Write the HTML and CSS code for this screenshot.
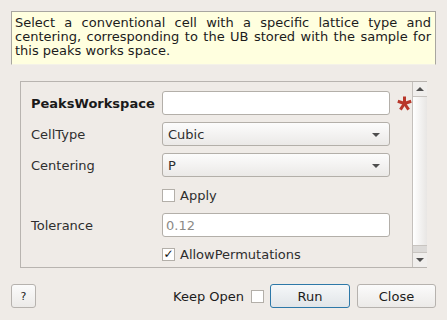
FILE: index.html
```html
<!DOCTYPE html>
<html>
<head>
<meta charset="utf-8">
<link rel="stylesheet" href="styles.css">
</head>
<body>
<div class="dialog">
  <div class="desc">Select a conventional cell with a specific lattice type and centering, corresponding to the UB stored with the sample for this peaks works space.</div>
  <div class="panel">
    <div class="form">
      <div class="row r1">
        <div class="label bold">PeaksWorkspace</div>
        <div class="input"></div>
        <svg class="req" width="15" height="15" viewBox="0 0 15 15"><g stroke="#b8372a" stroke-width="3" stroke-linecap="butt"><line x1="7.5" y1="7.5" x2="7.5" y2="0.5"/><line x1="7.5" y1="7.5" x2="14.2" y2="5.3"/><line x1="7.5" y1="7.5" x2="0.8" y2="5.3"/><line x1="7.5" y1="7.5" x2="11.6" y2="13.6"/><line x1="7.5" y1="7.5" x2="3.4" y2="13.6"/></g></svg>
      </div>
      <div class="row r2">
        <div class="label">CellType</div>
        <div class="combo"><span>Cubic</span><i class="arrow"></i></div>
      </div>
      <div class="row r3">
        <div class="label">Centering</div>
        <div class="combo"><span>P</span><i class="arrow"></i></div>
      </div>
      <div class="row r4">
        <div class="label"></div>
        <div class="check"><span class="box"></span><span>Apply</span></div>
      </div>
      <div class="row r5">
        <div class="label">Tolerance</div>
        <div class="input"><span class="ph">0.12</span></div>
      </div>
      <div class="row r6">
        <div class="label"></div>
        <div class="check"><span class="box checked">✓</span><span>AllowPermutations</span></div>
      </div>
    </div>
    <div class="scrollbar">
      <div class="sbtn up"><i class="tri-up"></i></div>
      <div class="handle"></div>
      <div class="groove"></div>
      <div class="sbtn down"><i class="tri-down"></i></div>
    </div>
  </div>
  <div class="buttons">
    <div class="btn help">?</div>
    <div class="spacer"></div>
    <span class="keep">Keep Open</span>
    <span class="box keepbox"></span>
    <div class="btn run">Run</div>
    <div class="btn close">Close</div>
  </div>
</div>
</body>
</html>
```
FILE: styles.css
```css
html, body {
  margin: 0;
  padding: 0;
  background: #efebe7;
}
body {
  width: 447px;
  height: 320px;
  overflow: hidden;
  font-family: "DejaVu Sans", sans-serif;
  font-size: 13px;
  color: #2e2e2e;
}
.dialog {
  padding: 11px 11px 0 11px;
}
.desc {
  height: 54px;
  box-sizing: border-box;
  background: #ffffdf;
  border: 1px solid #a8a6a0;
  border-bottom-color: #f4f2e8;
  padding: 4px 4px 0 3px;
  line-height: 14px;
  text-align: justify;
  color: #1c1c1c;
}
.panel {
  margin: 16px 9px 0 9px;
  height: 187px;
  box-sizing: border-box;
  border: 1px solid #b8b4b0;
  display: flex;
}
.form {
  flex: 1;
  padding: 9px 0 0 10px;
}
.row {
  display: flex;
  align-items: center;
  height: 24px;
  margin-bottom: 7px;
}
.r4 { height: 22px; margin-bottom: 7px; }
.r5 { margin-bottom: 7px; }
.r6 { height: 20px; }
.label {
  width: 131px;
  flex: none;
}
.bold { font-weight: bold; color: #1a1a1a; }
.input {
  width: 228px;
  height: 24px;
  box-sizing: border-box;
  background: #fff;
  border: 1px solid #b3afa9;
  border-radius: 3px;
  display: flex;
  align-items: center;
  padding-left: 3px;
}
.ph { color: #8c8a86; }
.req {
  margin-left: 7px;
}
.combo {
  width: 228px;
  height: 24px;
  box-sizing: border-box;
  border: 1px solid #b3afa9;
  border-radius: 3px;
  background: linear-gradient(#fcfcfc, #ebe9e7);
  display: flex;
  align-items: center;
  padding: 0 9px 0 5px;
}
.combo span { flex: 1; }
.arrow {
  width: 0;
  height: 0;
  border-left: 4px solid transparent;
  border-right: 4px solid transparent;
  border-top: 4px solid #4e4e4e;
  margin-top: 1px;
}
.check {
  display: flex;
  align-items: center;
}
.box {
  width: 13px;
  height: 13px;
  box-sizing: border-box;
  background: #fff;
  border: 1px solid #b3afa9;
  display: inline-flex;
  align-items: center;
  justify-content: center;
  margin-right: 5px;
  font-size: 12px;
  line-height: 1;
  color: #111;
}
.scrollbar {
  width: 14px;
  flex: none;
  border-left: 1px solid #c4c0bc;
  display: flex;
  flex-direction: column;
}
.sbtn {
  height: 14px;
  display: flex;
  align-items: center;
  justify-content: center;
  background: #f0eeec;
}
.up { border-bottom: 1px solid #c8c4c0; }
.down { border-top: 1px solid #c8c4c0; }
.tri-up {
  border-left: 4px solid transparent;
  border-right: 4px solid transparent;
  border-bottom: 4px solid #4e4e4e;
}
.tri-down {
  border-left: 4px solid transparent;
  border-right: 4px solid transparent;
  border-top: 4px solid #4e4e4e;
}
.handle {
  flex: 1;
  background: linear-gradient(90deg, #ffffff, #e8e6e4);
}
.groove {
  height: 6px;
  background: #dcdad8;
  border-top: 1px solid #c8c4c0;
}
.buttons {
  display: flex;
  align-items: center;
  margin-top: 16px;
  height: 24px;
}
.btn {
  height: 24px;
  box-sizing: border-box;
  border: 1px solid #b6b2ae;
  border-radius: 3px;
  background: linear-gradient(#fbfbfb, #eceae8);
  display: flex;
  align-items: center;
  justify-content: center;
  color: #1c1c1c;
}
.help { width: 25px; font-size: 11px; }
.spacer { flex: 1; }
.keep { margin-right: 7px; color: #1c1c1c; }
.keepbox { margin-right: 6px; }
.run {
  width: 80px;
  border-color: #2d78a8;
  background: linear-gradient(#f5f7f9, #e1e5e8);
  margin-right: 7px;
}
.close { width: 79px; }
```
